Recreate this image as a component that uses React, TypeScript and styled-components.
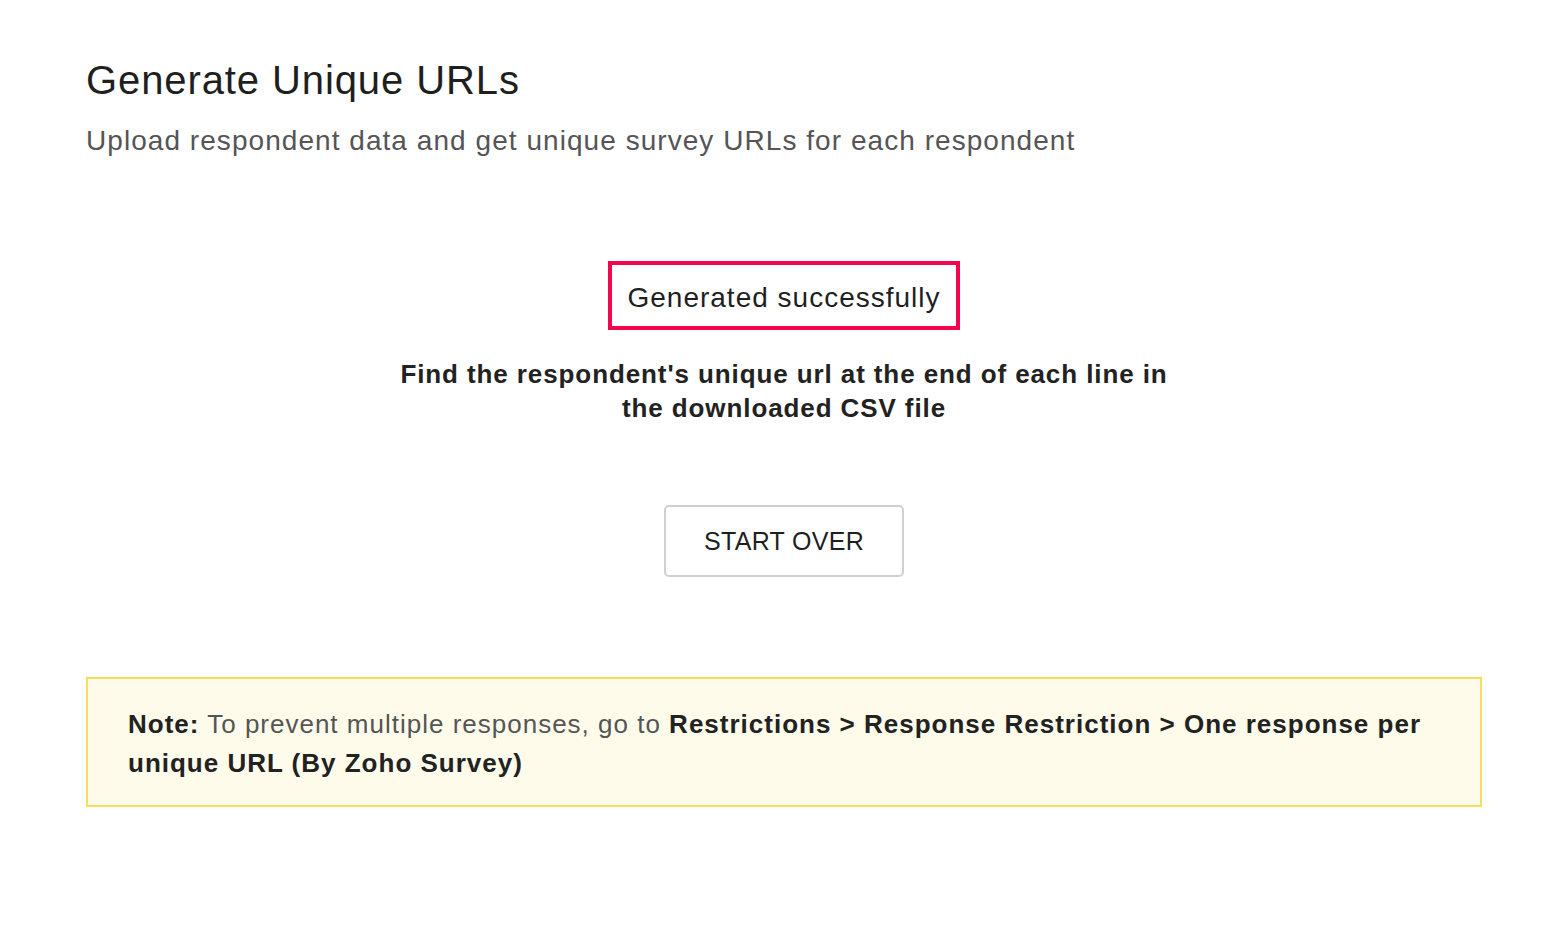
import React from "react";
import styled, { createGlobalStyle } from "styled-components";

const GlobalStyle = createGlobalStyle`
  body {
    margin: 0;
    background: #ffffff;
    font-family: "Liberation Sans", Arial, Helvetica, sans-serif;
    color: #222222;
  }
`;

const Page = styled.div`
  padding: 56px 64px 0 86px;
`;

const Title = styled.h1`
  margin: 0;
  font-size: 40px;
  font-weight: 400;
  line-height: 48px;
  letter-spacing: 0.9px;
  color: #1f1f1f;
`;

const Subtitle = styled.p`
  margin: 19px 0 0;
  font-size: 28px;
  line-height: 36px;
  letter-spacing: 1.05px;
  color: #555555;
`;

const Result = styled.div`
  display: flex;
  flex-direction: column;
  align-items: center;
  margin-top: 102px;
`;

const Status = styled.div`
  border: 4px solid #f2064d;
  padding: 14px 15px 10px;
  font-size: 28px;
  line-height: 37px;
  letter-spacing: 1px;
  color: #1f1f1f;
`;

const Hint = styled.p`
  margin: 27px 0 0;
  max-width: 790px;
  text-align: center;
  font-size: 26px;
  font-weight: 700;
  line-height: 34px;
  letter-spacing: 0.9px;
  color: #222222;
`;

const StartOver = styled.button`
  margin-top: 80px;
  width: 240px;
  height: 72px;
  background: #ffffff;
  border: 2px solid #d0d0d0;
  border-radius: 5px;
  font-family: "Liberation Sans", Arial, sans-serif;
  font-size: 25px;
  letter-spacing: 0.3px;
  color: #1f1f1f;
  cursor: pointer;
`;

const Note = styled.div`
  margin-top: 100px;
  background: #fefbea;
  border: 2px solid #f8dc5c;
  padding: 26px 40px 22px;
  font-size: 26px;
  line-height: 39px;
  letter-spacing: 1px;
  color: #555555;
`;

const Strong = styled.b`
  color: #222222;
`;

export default function App() {
  return (
    <>
      <GlobalStyle />
      <Page>
        <Title>Generate Unique URLs</Title>
        <Subtitle>
          Upload respondent data and get unique survey URLs for each respondent
        </Subtitle>
        <Result>
          <Status>Generated successfully</Status>
          <Hint>
            Find the respondent's unique url at the end of each line in the
            downloaded CSV file
          </Hint>
          <StartOver>START OVER</StartOver>
        </Result>
        <Note>
          <Strong>Note:</Strong> To prevent multiple responses, go to{" "}
          <Strong>
            Restrictions &gt; Response Restriction &gt; One response per unique
            URL (By Zoho Survey)
          </Strong>
        </Note>
      </Page>
    </>
  );
}
